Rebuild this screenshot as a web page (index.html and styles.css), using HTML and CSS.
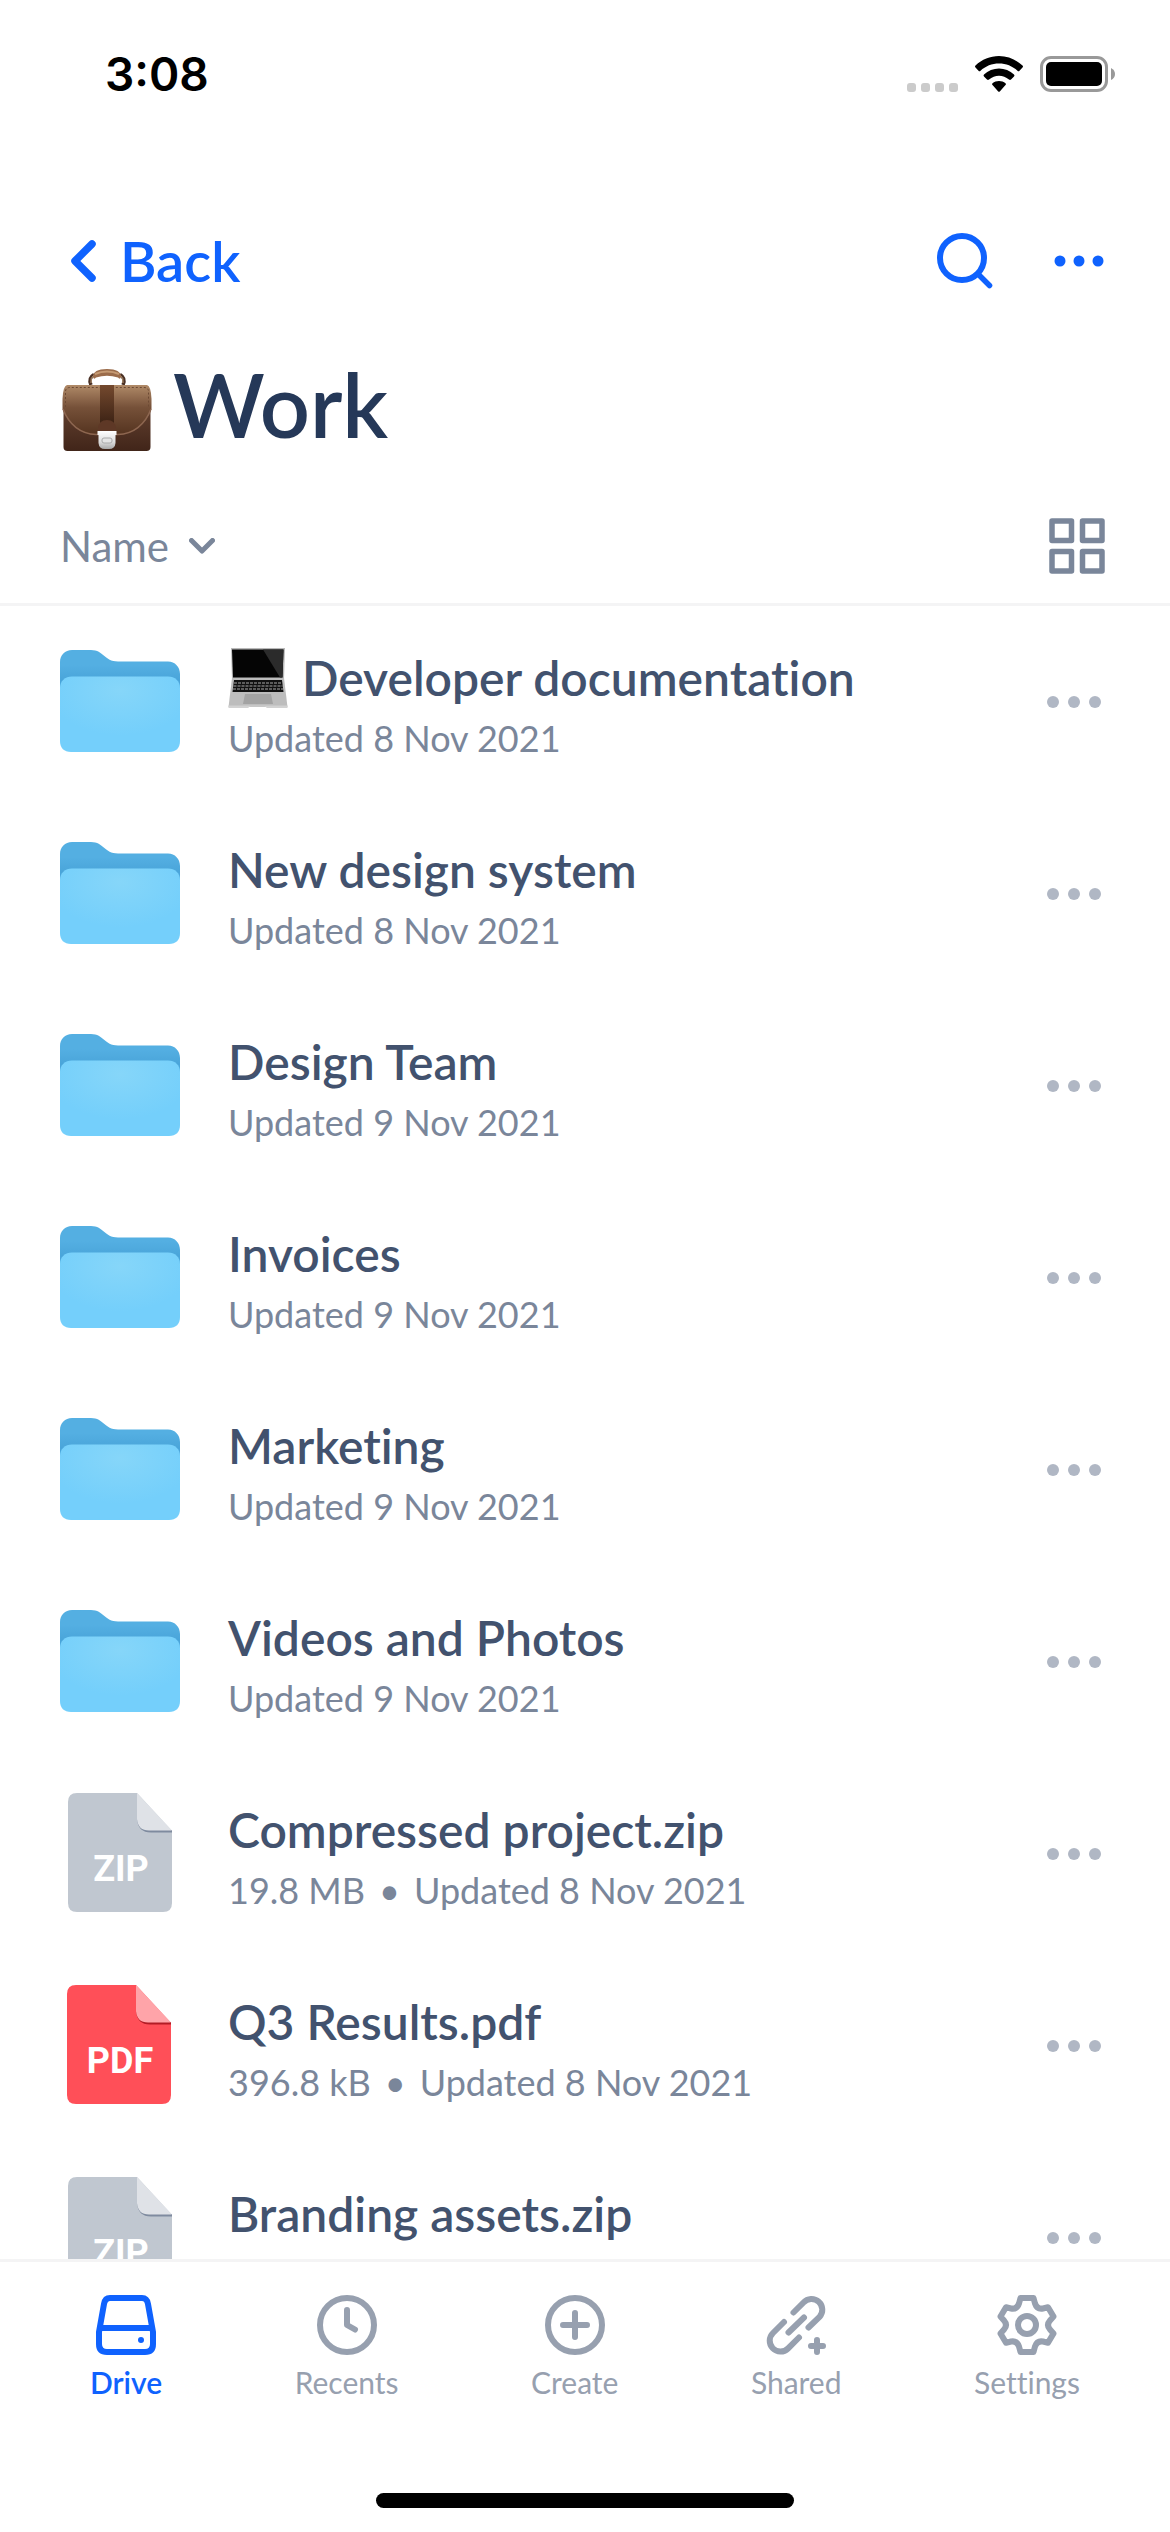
FILE: index.html
```html
<!DOCTYPE html>
<html lang="en">
<head>
<meta charset="utf-8">
<meta name="viewport" content="width=device-width, initial-scale=1">
<title>Work – Drive</title>
<link rel="stylesheet" href="styles.css">
</head>
<body>
<svg class="defs" aria-hidden="true">
  <defs>
    <linearGradient id="folder-back" x1="0" y1="0" x2="0" y2="1">
      <stop offset="0" stop-color="#54afe2"/><stop offset="0.25" stop-color="#54afe2"/><stop offset="0.5" stop-color="#4aa5da"/>
    </linearGradient>
    <radialGradient id="folder-front" cx="0.5" cy="0.18" r="0.6">
      <stop offset="0" stop-color="#86d6f9"/><stop offset="1" stop-color="#74cffb"/>
    </radialGradient>
    <symbol id="folder" viewBox="0 0 120 102">
      <path fill="url(#folder-back)" d="M0 12C0 5 5 0 12 0H31C44 0 44 11.500 58 11.500H108C115 11.500 120 17 120 24V60H0Z"/>
      <path fill="url(#folder-front)" d="M0 38C0 31 5 26.500 12 26.500H108C115 26.500 120 31 120 38V91C120 98 116 102 109 102H11C4 102 0 98 0 91Z"/>
    </symbol>
    <symbol id="more" viewBox="0 0 54 12">
      <circle cx="6" cy="6" r="6"/><circle cx="27" cy="6" r="6"/><circle cx="48" cy="6" r="6"/>
    </symbol>
    <symbol id="sheet" viewBox="0 0 104 119">
      <path fill="currentColor" d="M9 0H69L104 38V110Q104 119 95 119H9Q0 119 0 110V9Q0 0 9 0Z"/>
    </symbol>
  </defs>
</svg>

<header class="top">
  <div class="status">
    <span class="clock">3:08</span>
    <div class="status-icons">
      <svg width="51" height="9" viewBox="0 0 51 9" fill="#cbcbcb" class="signal"><rect width="9" height="9" rx="3"/><rect x="14" width="9" height="9" rx="3"/><rect x="28" width="9" height="9" rx="3"/><rect x="42" width="9" height="9" rx="3"/></svg>
      <svg width="48" height="36" viewBox="0 0 48 36" class="wifi"><path d="M24 0C33 0 41 3.500 47.500 9.500Q48.500 10.500 47.500 11.500L44.500 14.800Q43.500 15.800 42.500 14.800C37.500 10 31 7.500 24 7.500S10.500 10 5.500 14.800Q4.500 15.800 3.500 14.800L.5 11.500Q-.5 10.500.5 9.500C7 3.500 15 0 24 0Z"/><path d="M24 12.500C29.500 12.500 35 14.700 39 18.500Q40 19.400 39 20.400L36 23.600Q35 24.500 34 23.600C31 21 27.700 19.700 24 19.700S17 21 14 23.600Q13 24.500 12 23.600L9 20.400Q8 19.400 9 18.500C13 14.700 18.500 12.500 24 12.500Z"/><path d="M24 25C26.500 25 28.700 25.900 30.500 27.300Q31.300 28.100 30.500 29L25 35.300Q24 36.300 23 35.300L17.500 29Q16.700 28.100 17.500 27.300C19.300 25.900 21.500 25 24 25Z"/></svg>
      <svg width="75" height="36" viewBox="0 0 75 36"><rect x="1.500" y="1.500" width="65" height="33" rx="9.500" fill="none" stroke="#999" stroke-width="3"/><rect x="6" y="6" width="56" height="24" rx="5"/><path fill="#999" d="M71 12Q75 14 75 18T71 24Z"/></svg>
    </div>
  </div>
  <nav class="navbar" aria-label="Folder">
    <button class="back" type="button">
      <svg width="26" height="42" viewBox="0 0 26 42"><path d="M22 4L5 21L22 38" fill="none" stroke="currentColor" stroke-width="7.500" stroke-linecap="round" stroke-linejoin="round"/></svg>
      Back
    </button>
    <div class="actions">
      <button type="button" aria-label="Search"><svg width="56" height="56" viewBox="0 0 56 56" fill="none" stroke="currentColor" stroke-linecap="round"><circle cx="25" cy="25" r="22" stroke-width="6"/><path d="M41.500 41.500L52.500 52.500" stroke-width="5.500"/></svg></button>
      <button type="button" aria-label="More"><svg width="50" height="12" viewBox="0 0 50 12" fill="currentColor"><circle cx="6" cy="6" r="5.500"/><circle cx="25" cy="6" r="5.500"/><circle cx="44" cy="6" r="5.500"/></svg></button>
    </div>
  </nav>
  <h1 class="title">
    <svg width="90" height="83" viewBox="0 0 90 83" role="img" aria-label="Briefcase">
      <defs>
        <linearGradient id="bag" x1="0" y1="0" x2="0" y2="1"><stop offset="0" stop-color="#b08a68"/><stop offset=".45" stop-color="#765139"/><stop offset="1" stop-color="#54331f"/></linearGradient>
        <linearGradient id="bag-low" x1="0" y1="0" x2="0" y2="1"><stop offset="0" stop-color="#6d4936"/><stop offset="1" stop-color="#412519"/></linearGradient>
        <linearGradient id="strap" x1="0" y1="0" x2="0" y2="1"><stop offset="0" stop-color="#74492e"/><stop offset="1" stop-color="#3d2315"/></linearGradient>
        <linearGradient id="clasp" x1="0" y1="0" x2="0" y2="1"><stop offset="0" stop-color="#fff"/><stop offset=".6" stop-color="#ddd"/><stop offset="1" stop-color="#a9a9a9"/></linearGradient>
      </defs>
      <path d="M29 16Q26 9 32 5.500M61 16Q64 9 58 5.500" fill="none" stroke="#4a3024" stroke-width="3.500"/>
      <path d="M29 14Q28 9 32 6M61 14Q62 9 58 6" fill="none" stroke="#c2a17c" stroke-width="1"/>
      <path d="M31 8Q31 0 45 0T59 8Q58 11 56 8.500Q45 5 34 8.500Q32 11 31 8Z" fill="#9b6c4b"/>
      <path d="M33 5Q45 0 57 5" fill="none" stroke="#c59a73" stroke-width="2"/>
      <rect x="1.500" y="24" width="87" height="58" rx="4" fill="url(#bag-low)"/>
      <path d="M5 16H85Q89 17 89.500 30V40C84 56 72 65 57 66H33C18 65 6 56 .5 40V30Q1 17 5 16Z" fill="url(#bag)"/>
      <path d="M1 40C7 56 19 65 34 65.500H56C71 65 83 56 89 40" fill="none" stroke="#8d6650" stroke-width="1.500"/>
      <path d="M3.500 38V22Q4 18.500 8 18.500H82Q86 18.500 86.500 22V38" fill="none" stroke="#6d4a34" stroke-width="1" stroke-dasharray="2 2"/>
      <rect x="38" y="16" width="14" height="38" fill="url(#strap)"/>
      <path d="M36 62V59Q37 51 45 51T54 59V62Z" fill="#5e3826"/>
      <path d="M35.500 62H54.500V66H53.500V74Q53 80 47 80H43Q37 80 36.500 74V66H35.500Z" fill="url(#clasp)"/>
      <rect x="40" y="69" width="10" height="5" rx="2" fill="#e4e4e4" stroke="#aaa" stroke-width="1"/>
    </svg>
    <span class="title-text">Work</span>
  </h1>
  <div class="sortbar">
    <button class="sort" type="button">Name
      <svg width="26" height="16" viewBox="0 0 26 16"><path d="M2.500 2.500L13 13L23.500 2.500" fill="none" stroke="currentColor" stroke-width="5" stroke-linecap="round" stroke-linejoin="round"/></svg>
    </button>
    <button class="grid" type="button" aria-label="Grid view"><svg width="56" height="56" viewBox="0 0 56 56" fill="none" stroke="currentColor" stroke-width="5.500" stroke-linejoin="round"><rect x="3" y="3" width="19.500" height="19.500"/><rect x="33.500" y="3" width="19.500" height="19.500"/><rect x="3" y="33.500" width="19.500" height="19.500"/><rect x="33.500" y="33.500" width="19.500" height="19.500"/></svg></button>
  </div>
</header>

<main class="files">
  <ul class="list">
    <li class="row">
      <svg class="thumb" width="120" height="102"><use href="#folder"/></svg>
      <div class="info">
        <h2 class="name">
          <svg class="laptop" width="60" height="60" viewBox="0 0 60 60" role="img" aria-label="Laptop">
            <path d="M3 0H57L56 31H4Z" fill="#b9b9b9"/><path d="M4 1.500H55.500L54.500 29.500H5Z" fill="#050505"/><path d="M35 1.500H55.500L54.500 29.500H52Z" fill="#2b2b2b"/>
            <path d="M4 30H56L59.500 59H.5Z" fill="#bdbdbd"/><path d="M6 32H54L55.500 44H4.500Z" fill="#111"/><path d="M6 35H54M5.500 38H54.500M5 41H55" stroke="#a8a8a8" stroke-width="1" stroke-dasharray="3 1"/><path d="M17 46H43L45 56H15Z" fill="#a3a3a3"/><path d="M.5 57.500H59.500V60H39L37 58.500H22L20 60H.5Z" fill="#d2d2d2"/>
          </svg>
          Developer documentation</h2>
        <p class="meta">Updated 8 Nov 2021</p>
      </div>
      <button class="more" type="button" aria-label="More options"><svg width="54" height="12"><use href="#more"/></svg></button>
    </li>
    <li class="row">
      <svg class="thumb" width="120" height="102"><use href="#folder"/></svg>
      <div class="info"><h2 class="name">New design system</h2><p class="meta">Updated 8 Nov 2021</p></div>
      <button class="more" type="button" aria-label="More options"><svg width="54" height="12"><use href="#more"/></svg></button>
    </li>
    <li class="row">
      <svg class="thumb" width="120" height="102"><use href="#folder"/></svg>
      <div class="info"><h2 class="name">Design Team</h2><p class="meta">Updated 9 Nov 2021</p></div>
      <button class="more" type="button" aria-label="More options"><svg width="54" height="12"><use href="#more"/></svg></button>
    </li>
    <li class="row">
      <svg class="thumb" width="120" height="102"><use href="#folder"/></svg>
      <div class="info"><h2 class="name">Invoices</h2><p class="meta">Updated 9 Nov 2021</p></div>
      <button class="more" type="button" aria-label="More options"><svg width="54" height="12"><use href="#more"/></svg></button>
    </li>
    <li class="row">
      <svg class="thumb" width="120" height="102"><use href="#folder"/></svg>
      <div class="info"><h2 class="name">Marketing</h2><p class="meta">Updated 9 Nov 2021</p></div>
      <button class="more" type="button" aria-label="More options"><svg width="54" height="12"><use href="#more"/></svg></button>
    </li>
    <li class="row">
      <svg class="thumb" width="120" height="102"><use href="#folder"/></svg>
      <div class="info"><h2 class="name">Videos and Photos</h2><p class="meta">Updated 9 Nov 2021</p></div>
      <button class="more" type="button" aria-label="More options"><svg width="54" height="12"><use href="#more"/></svg></button>
    </li>
    <li class="row">
      <svg class="thumb file zip" width="120" height="119" viewBox="-8 0 120 119"><use href="#sheet" width="104" height="119"/><path class="edge" d="M69 26Q70 39.500 83 39.500H104V37L80 36Z"/><path class="fold" d="M69 0V26Q70 37.500 81 37.500H104Z"/><text x="53" y="88" text-anchor="middle">ZIP</text></svg>
      <div class="info"><h2 class="name">Compressed project.zip</h2><p class="meta">19.8 MB<span class="dot">•</span>Updated 8 Nov 2021</p></div>
      <button class="more" type="button" aria-label="More options"><svg width="54" height="12"><use href="#more"/></svg></button>
    </li>
    <li class="row">
      <svg class="thumb file pdf" width="120" height="119" viewBox="-7 0 120 119"><use href="#sheet" width="104" height="119"/><path class="edge" d="M69 26Q70 39.500 83 39.500H104V37L80 36Z"/><path class="fold" d="M69 0V26Q70 37.500 81 37.500H104Z"/><text x="53" y="88" text-anchor="middle">PDF</text></svg>
      <div class="info"><h2 class="name">Q3 Results.pdf</h2><p class="meta">396.8 kB<span class="dot">•</span>Updated 8 Nov 2021</p></div>
      <button class="more" type="button" aria-label="More options"><svg width="54" height="12"><use href="#more"/></svg></button>
    </li>
    <li class="row">
      <svg class="thumb file zip" width="120" height="119" viewBox="-8 0 120 119"><use href="#sheet" width="104" height="119"/><path class="edge" d="M69 26Q70 39.500 83 39.500H104V37L80 36Z"/><path class="fold" d="M69 0V26Q70 37.500 81 37.500H104Z"/><text x="53" y="88" text-anchor="middle">ZIP</text></svg>
      <div class="info"><h2 class="name">Branding assets.zip</h2></div>
      <button class="more" type="button" aria-label="More options"><svg width="54" height="12"><use href="#more"/></svg></button>
    </li>
  </ul>
</main>

<footer class="bottom">
  <nav class="tabs" aria-label="Main">
    <a class="tab active" href="#drive"><svg width="60" height="60" viewBox="0 0 60 60" fill="none" stroke="currentColor" stroke-width="6" stroke-linejoin="round"><path d="M14 3H46Q51 3 52 9L57 37V49Q57 57 49 57H11Q3 57 3 49V37L8 9Q9 3 14 3Z"/><path d="M4 33H56"/><circle cx="45" cy="45" r="3" fill="currentColor" stroke="none"/></svg>Drive</a>
    <a class="tab" href="#recents"><svg width="60" height="60" viewBox="0 0 60 60" fill="none" stroke="currentColor" stroke-width="6" stroke-linecap="round" stroke-linejoin="round"><circle cx="30" cy="30" r="27"/><path d="M30 15V30L38 34.500"/></svg>Recents</a>
    <a class="tab" href="#create"><svg width="60" height="60" viewBox="0 0 60 60" fill="none" stroke="currentColor" stroke-width="6" stroke-linecap="round"><circle cx="30" cy="30" r="27"/><path d="M18 30H42M30 18V42"/></svg>Create</a>
    <a class="tab" href="#shared"><svg width="60" height="60" viewBox="0 0 60 60" fill="none" stroke="currentColor" stroke-width="6" stroke-linecap="round"><path d="M27.500 17.500L37.500 7.500A10.500 10.500 0 0 1 53.500 22L42.500 32.500"/><path d="M18 27L7 38A10.500 10.500 0 0 0 22 53.500L33 42.500"/><path d="M22.500 37.500L38 22.500M45 51H57M51 45V57"/></svg>Shared</a>
    <a class="tab" href="#settings"><svg width="60" height="60" viewBox="0 0 60 60" fill="none" stroke="currentColor" stroke-width="6" stroke-linejoin="round"><path d="M23.500 3H36.500L38 8.500Q40 14.500 46 13.500L51 12.200L56.500 21.500L53 25.500Q49 30 53 34.500L56.500 38.500L51 47.800L46 46.500Q40 45.500 38 51.500L36.500 57H23.500L22 51.500Q20 45.500 14 46.500L9 47.800L3.500 38.500L7 34.500Q11 30 7 25.500L3.500 21.500L9 12.200L14 13.500Q20 14.500 22 8.500Z"/><circle cx="30" cy="30" r="9"/></svg>Settings</a>
  </nav>
  <div class="home-indicator"></div>
</footer>
</body>
</html>
```
FILE: styles.css
```css
* {
  box-sizing: border-box;
}

body {
  margin: 0;
  height: 100vh;
  display: flex;
  flex-direction: column;
  background: #fff;
  color: #42526e;
  font-family: Lato, "Liberation Sans", sans-serif;
  font-variant-ligatures: none;
}

h1, h2, p, ul {
  margin: 0;
  padding: 0;
}

svg {
  display: block;
  flex: none;
}

button {
  display: flex;
  align-items: center;
  padding: 0;
  border: 0;
  background: none;
  color: inherit;
  font: inherit;
}

.defs {
  position: absolute;
  width: 0;
  height: 0;
}

.top {
  flex: none;
  border-bottom: 3px solid #f4f4f5;
}

.status {
  display: flex;
  justify-content: space-between;
  align-items: center;
  height: 148px;
  padding: 0 55px 0 105px;
}

.clock {
  color: #000;
  font: 600 46px/48px Inter, sans-serif;
}

.status-icons {
  display: flex;
  align-items: flex-end;
}

.signal {
  margin-right: 17px;
}

.wifi {
  margin-right: 17px;
}

.navbar {
  display: flex;
  justify-content: space-between;
  align-items: center;
  height: 226px;
  padding: 0 66px 0 70px;
  color: #0f62fe;
}

.back {
  gap: 24px;
  font-size: 56px;
  font-weight: 600;
  line-height: 64px;
}

.actions {
  display: flex;
  align-items: center;
  gap: 61px;
}

.title {
  display: flex;
  align-items: center;
  gap: 21px;
  height: 72px;
  padding: 0 60px 0 62px;
  color: #253858;
  font-size: 88px;
  font-weight: 600;
  line-height: 72px;
}

.title-text {
  padding-bottom: 12px;
}

.sortbar {
  display: flex;
  justify-content: space-between;
  align-items: center;
  height: 157px;
  padding: 42px 65px 0 60px;
  color: #7a869a;
}

.sort {
  gap: 20px;
  font-size: 42px;
  line-height: 48px;
}

.files {
  flex: 1;
  min-height: 0;
  overflow: hidden;
}

.list {
  list-style: none;
}

.row {
  display: flex;
  align-items: center;
  height: 192px;
  padding: 0 69px 0 60px;
}

.thumb {
  margin: 0 48px 3px 0;
}

.info {
  flex: 1;
  min-width: 0;
  height: 144px;
}

.name {
  display: flex;
  align-items: center;
  gap: 14px;
  height: 60px;
  margin-top: 18px;
  font-size: 48px;
  font-weight: 600;
  line-height: 60px;
}

.meta {
  color: #7a869a;
  font-size: 36px;
  line-height: 60px;
}

.dot {
  margin: 0 14px;
}

.more {
  color: #b0b7c4;
  fill: currentColor;
}

.zip {
  color: #c0c7d0;
}

.zip .fold {
  fill: #dfe2e7;
}

.zip .edge {
  fill: #7f8b9f;
}

.pdf {
  color: #ff4f58;
}

.pdf .fold {
  fill: #ffa4a9;
}

.pdf .edge {
  fill: #b31c25;
}

.file text {
  fill: #fff;
  font: 700 36px Roboto, sans-serif;
}

.bottom {
  flex: none;
  height: 273px;
  padding-top: 33px;
  border-top: 3px solid #f4f4f5;
  background: #fff;
}

.tabs {
  display: flex;
  justify-content: space-between;
  padding: 0 90px;
}

.tab {
  display: flex;
  flex-direction: column;
  align-items: center;
  gap: 9px;
  color: #97a0af;
  font-size: 30px;
  line-height: 36px;
  text-decoration: none;
}

.active {
  color: #0f62fe;
  font-weight: 600;
}

.home-indicator {
  width: 418px;
  max-width: 60%;
  height: 15px;
  margin: 93px auto 0;
  border-radius: 8px;
  background: #000;
}
```
